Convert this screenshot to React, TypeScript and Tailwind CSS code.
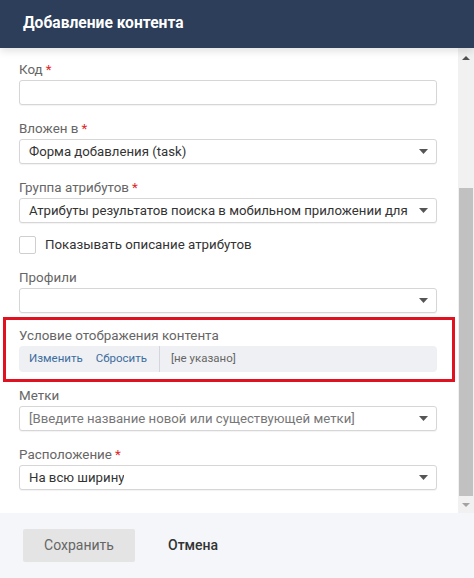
import React from "react";

function Caret() {
  return (
    <svg width="9" height="5" viewBox="0 0 9 5" className="shrink-0">
      <polygon points="0,0 9,0 4.5,5" fill="#555" />
    </svg>
  );
}

function Label({ text, required }: { text: string; required?: boolean }) {
  return (
    <div className="h-[21px] leading-[21px] text-[13.4px] text-[#666]">
      {text}
      {required && <span className="text-[#e0262b] ml-[3px]">*</span>}
    </div>
  );
}

function Select({ value, placeholder }: { value?: string; placeholder?: boolean }) {
  return (
    <div className="h-[25px] flex items-center justify-between gap-[4px] pl-[9px] pr-[8px] bg-white border border-[#d6d6d6] rounded-[3px] shadow-[0_1px_1px_rgba(0,0,0,0.05)]">
      <span
        className={
          "text-[13.2px] whitespace-nowrap overflow-hidden " +
          (placeholder ? "text-[#777]" : "text-[#333]")
        }
      >
        {value}
      </span>
      <Caret />
    </div>
  );
}

function Field({
  label,
  required,
  value,
  placeholder,
  input,
}: {
  label: string;
  required?: boolean;
  value?: string;
  placeholder?: boolean;
  input?: boolean;
}) {
  return (
    <div className="mb-[13px]">
      <Label text={label} required={required} />
      {input ? (
        <div className="h-[25px] bg-white border border-[#d6d6d6] rounded-[3px] shadow-[0_1px_1px_rgba(0,0,0,0.05)]" />
      ) : (
        <Select value={value} placeholder={placeholder} />
      )}
    </div>
  );
}

function Scrollbar() {
  return (
    <div className="w-[16px] bg-[#f1f1f1] flex flex-col items-center">
      <div className="h-[17px] flex items-center justify-center pt-[2px]">
        <svg width="8" height="4" viewBox="0 0 8 4">
          <polygon points="0,4 8,4 4,0" fill="#505050" />
        </svg>
      </div>
      <div className="flex-1 w-full flex flex-col">
        <div className="h-[123px]" />
        <div className="flex-1 bg-[#c1c1c1] mx-[1px]" />
      </div>
      <div className="h-[17px] flex items-center justify-center">
        <svg width="8" height="4" viewBox="0 0 8 4">
          <polygon points="0,0 8,0 4,4" fill="#a3a3a3" />
        </svg>
      </div>
    </div>
  );
}

export default function App() {
  return (
    <div
      className="w-[474px] h-[578px] flex flex-col bg-white overflow-hidden"
      style={{ fontFamily: "Roboto, 'Liberation Sans', sans-serif" }}
    >
      <div className="h-[48px] shrink-0 bg-[#2c3e5a] flex items-center pl-[23px] relative z-10 shadow-[0_3px_8px_rgba(0,0,0,0.12)]">
        <h1 className="text-white text-[15.6px] font-bold">Добавление контента</h1>
      </div>

      <div className="h-[465px] shrink-0 flex">
        <div className="flex-1 pt-[11px] pl-[19px] pr-[21px] overflow-hidden">
          <Field label="Код" required input />
          <Field label="Вложен в" required value="Форма добавления (task)" />
          <Field
            label="Группа атрибутов"
            required
            value="Атрибуты результатов поиска в мобильном приложении для"
          />

          <div className="h-[18px] flex items-center mb-[13px]">
            <div className="w-[17px] h-[18px] border border-[#cfcfcf] rounded-[2px] bg-white" />
            <span className="ml-[9px] text-[13.3px] text-[#333]">
              Показывать описание атрибутов
            </span>
          </div>

          <div className="mb-[4px]">
            <Label text="Профили" />
            <Select value="" />
          </div>

          <div className="-ml-[16px] -mr-[18px] border-[3px] border-[#e0121f] pt-[5px] pb-[7px] pl-[13px] pr-[15px] mb-[3px]">
            <Label text="Условие отображения контента" />
            <div className="h-[26px] bg-[#eef0f3] rounded-[4px] flex items-center text-[11.5px]">
              <span className="ml-[10px] text-[#3d6d9e]">Изменить</span>
              <span className="ml-[13px] text-[#3d6d9e]">Сбросить</span>
              <div className="ml-[12px] w-px h-full bg-[#d3d6db]" />
              <span className="ml-[11px] text-[#666]">[не указано]</span>
            </div>
          </div>

          <Field
            label="Метки"
            value="[Введите название новой или существующей метки]"
            placeholder
          />
          <Field label="Расположение" required value="На всю ширину" />
        </div>
        <Scrollbar />
      </div>

      <div className="flex-1 bg-[#f4f6f9] flex items-center pl-[23px]">
        <button className="w-[112px] h-[33px] bg-[#e4e4e4] rounded-[2px] text-[14px] text-[#666]">
          Сохранить
        </button>
        <button className="ml-[33px] text-[14px] text-[#333] font-medium">Отмена</button>
      </div>
    </div>
  );
}
